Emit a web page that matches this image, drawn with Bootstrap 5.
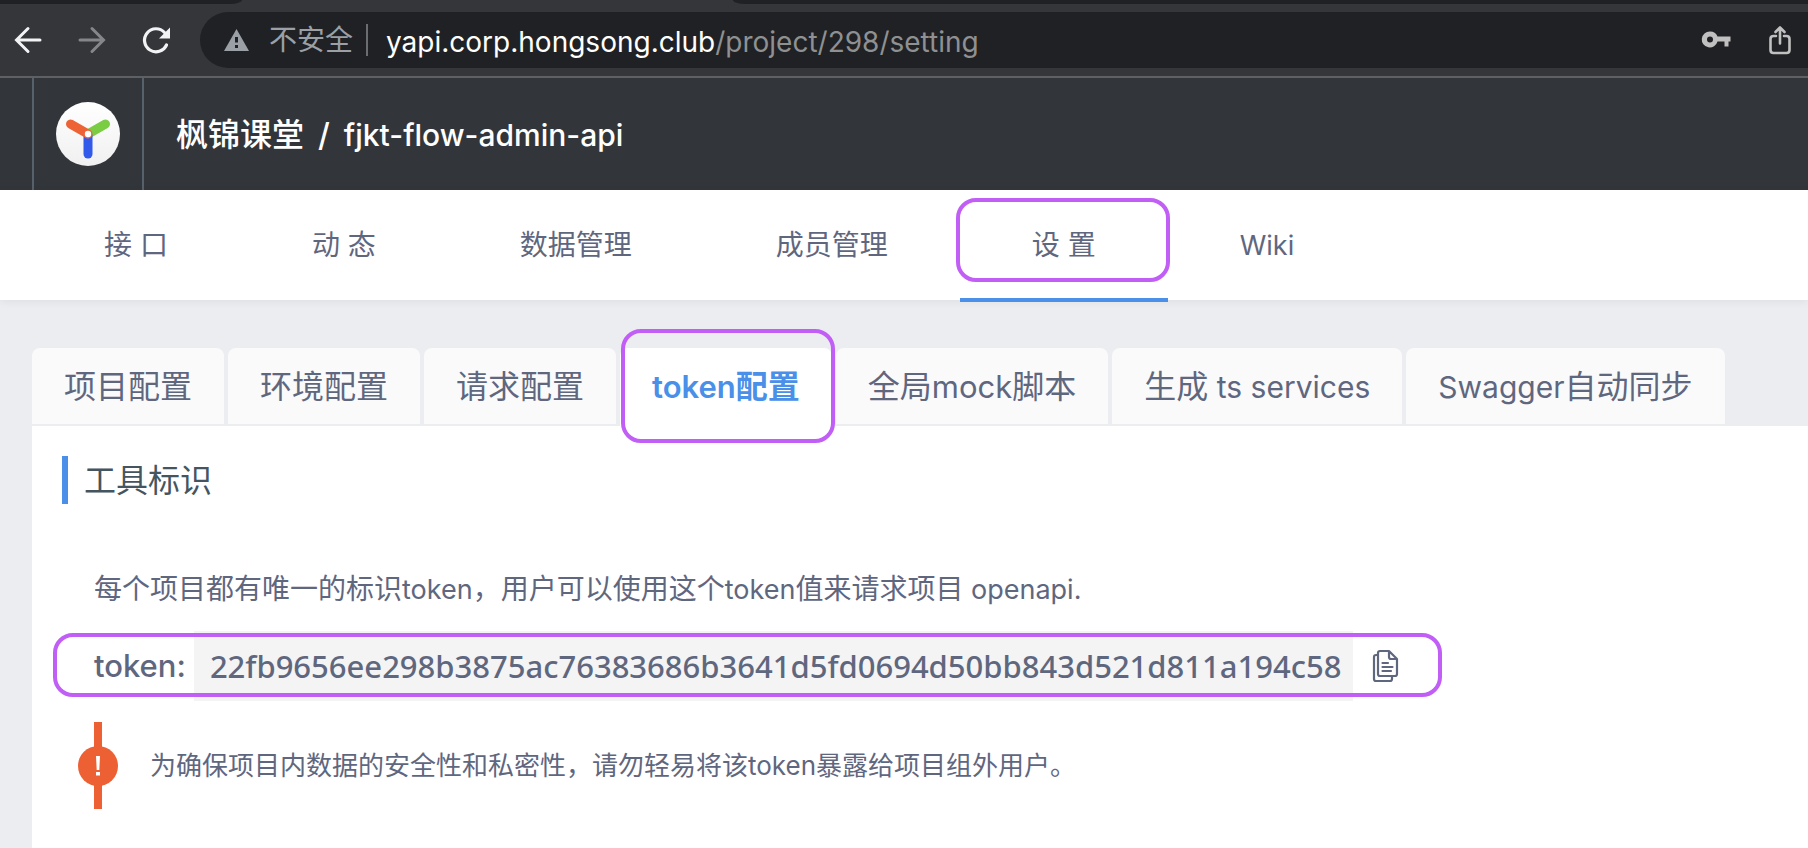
<!DOCTYPE html>
<html lang="zh-CN">
<head>
<meta charset="utf-8">
<meta name="viewport" content="width=device-width, initial-scale=1">
<title>YApi - fjkt-flow-admin-api</title>
<link href="https://cdn.jsdelivr.net/npm/bootstrap@5.3.0/dist/css/bootstrap.min.css" rel="stylesheet">
<style>
  body { font-family: Inter, "Noto Sans CJK SC", sans-serif; font-size: 28px; line-height: 40px; color: #5f677f; background: #ecedf1; }
  .latin { font-size: 27px; }
  .latin-md { font-size: 30px; }
  .latin-lg { font-size: 31px; }

  /* browser toolbar */
  .tab-strip { height: 4px; background: #35363a; }
  .strip-left { width: 242px; background: #202124; border-bottom-right-radius: 12px 4px; }
  .strip-gap { width: 491px; }
  .strip-right { background: #202124; border-bottom-left-radius: 12px 4px; }
  .toolbar { height: 74px; background: #35363a; border-bottom: 2px solid #5f6064; padding: 8px 0 8px 8px; gap: 24px; }
  .tool-btn { width: 40px; height: 40px; padding: 0; border: 0; background: none; line-height: 0; flex: none; }
  .omnibox { height: 56px; background: #202124; border-radius: 28px 0 0 28px; padding-left: 24px; padding-right: 8px; color: #9aa0a6; line-height: 42px; }
  .omnibox .sep { width: 2px; height: 32px; background: #6b6d71; margin: 0 18px 0 13px; }
  .omnibox .host { color: #fff; }
  .omnibox .path { color: #8f9092; }

  /* site header */
  .site-head { height: 112px; background: #32363a; color: #fff; font-size: 32px; padding-left: 32px; }
  .logo-cell { width: 112px; border-left: 2px solid #56616b; border-right: 2px solid #56616b; }
  .crumb { margin-left: 32px; padding-top: 2px; font-weight: 500; }
  .crumb a { color: inherit; text-decoration: none; }
  .crumb .slash { margin: 0 14px; }

  /* project menu */
  .project-menu { height: 110px; background: #fff; padding-left: 32px; box-shadow: 0 2px 8px rgba(0,0,0,.06); position: relative; }
  .project-menu .nav-link { color: inherit; padding: 0 72px; line-height: 110px; height: 112px; white-space: nowrap; }
  .project-menu .active { border-bottom: 4px solid #4a90e8; }

  /* purple highlight frames laid over the controls */
  .framed { position: relative; }
  .framed::after { content: ""; position: absolute; border: 4px solid #c15ef6; border-radius: 20px; pointer-events: none; z-index: 2; }
  .frame-menu::after { top: 8px; bottom: 16px; left: -4px; right: -2px; }
  .frame-tab::after { top: -19px; bottom: -17px; left: 1px; right: -3px; }
  .frame-token::after { top: 2px; bottom: 4px; left: -41px; right: -33px; }

  /* settings tabs */
  .settings { padding: 48px 0 0 32px; }
  .setting-tabs { gap: 4px; border: 0; height: 78px; font-size: 32px; }
  .setting-tabs .nav-link { height: 76px; padding: 2px 32px 0; margin: 0; border: 0; border-radius: 8px 8px 0 0; background: #fafafa; color: #5f677f; white-space: nowrap; }
  .setting-tabs .nav-link.active { height: 78px; padding-bottom: 2px; background: #fff; color: #4a90e8; font-weight: 600; }
  .pane { background: #fff; padding: 30px 30px 0; }
  .pane h2 { font-size: 32px; line-height: 50px; height: 48px; margin: 0; padding-left: 16px; border-left: 6px solid #4a90e8; color: #455560; font-weight: 400; }
  .token-row { font-size: 32px; height: 70px; width: fit-content; margin-top: 21px; font-weight: 500; }
  .token-row code { font-family: "Noto Sans", sans-serif; font-size: 31px; font-weight: 500; color: #5f677f; background: #f4f4f4; padding: 0 12px 0 16px; line-height: 70px; }
  .pane-body { padding: 65px 0 0 32px; }
  .warn { font-size: 26px; margin: 21px 0 0 -16px; gap: 32px; }
</style>
</head>
<body class="min-vh-100 d-flex flex-column">
<header>
  <div class="tab-strip d-flex">
    <div class="strip-left"></div><div class="strip-gap"></div><div class="strip-right flex-grow-1"></div>
  </div>
  <div class="toolbar d-flex align-items-center">
    <button class="tool-btn" type="button" aria-label="后退"><svg width="40" height="40" fill="none" stroke="#f1f3f4" stroke-width="3" stroke-linecap="round"><path d="M32 20H9M20 8.500L8.500 20L20 31.500"/></svg></button>
    <button class="tool-btn" type="button" aria-label="前进"><svg width="40" height="40" fill="none" stroke="#85868a" stroke-width="3" stroke-linecap="round"><path d="M8 20H31M20 8.500L31.500 20L20 31.500"/></svg></button>
    <button class="tool-btn" type="button" aria-label="重新加载"><svg width="40" height="40" fill="none" stroke="#f1f3f4" stroke-width="3.200" stroke-linecap="round"><path d="M30.500 25A11.500 11.500 0 1 1 28.500 12.500"/><path d="M34 7.500V18.500H23Z" fill="#f1f3f4" stroke="none"/></svg></button>
    <div class="omnibox d-flex align-items-center flex-grow-1">
      <svg class="flex-shrink-0" width="25" height="22" viewBox="0 0 25 22"><path d="M12.500 0L25 22H0Z" fill="#9aa0a6"/><path d="M11 8h3v5.500h-3zM11 16h3v3h-3z" fill="#202124"/></svg>
      <span class="ms-3 ps-1">不安全</span><span class="sep"></span>
      <span class="flex-grow-1 pt-1"><span class="host">yapi.corp.hongsong.club</span><span class="path">/project/298/setting</span></span>
      <button class="tool-btn" type="button" aria-label="密码"><svg width="40" height="40"><path fill="#c0c0c0" fill-rule="evenodd" d="M14 11.500a8 8 0 0 1 7.500 5H34.500v5H32.500v5h-4v-5H21.500a8 8 0 1 1-7.500-10zM14 16.500a3 3 0 1 0 0 6a3 3 0 1 0 0-6z"/></svg></button>
      <button class="tool-btn ms-4" type="button" aria-label="分享"><svg width="40" height="40" fill="none" stroke="#c0c0c0" stroke-width="2.600" stroke-linecap="round" stroke-linejoin="round"><path d="M16 16H13.500Q10.500 16 10.500 19V30Q10.500 33 13.500 33H26.500Q29.500 33 29.500 30V19Q29.500 16 26.500 16H24M20 23.500V7.500M15.500 12L20 7.500L24.500 12"/></svg></button>
    </div>
  </div>
  <div class="site-head d-flex align-items-stretch">
    <a href="#" class="logo-cell d-flex align-items-center justify-content-center" aria-label="YApi">
      <svg width="64" height="64" viewBox="0 0 64 64"><defs><linearGradient id="disc" x2="0" y2="1"><stop stop-color="#fff"/><stop offset="1" stop-color="#f0f0f0"/></linearGradient></defs><circle cx="32" cy="32" r="32" fill="url(#disc)"/><g stroke-width="9" stroke-linecap="round"><path d="M32 32L49.500 22" stroke="#7acc43"/><path d="M32 34V52" stroke="#3159ea"/><path d="M32 32L14.500 22" stroke="#ee6336"/></g><circle cx="32" cy="32" r="3.200" fill="#fff"/></svg>
    </a>
    <div class="crumb align-self-center"><a href="#">枫锦课堂</a><span class="slash">/</span><span class="latin-md">fjkt-flow-admin-api</span></div>
  </div>
  <nav class="project-menu d-flex">
    <a class="nav-link" href="#">接 口</a>
    <a class="nav-link" href="#">动 态</a>
    <a class="nav-link" href="#">数据管理</a>
    <a class="nav-link" href="#">成员管理</a>
    <a class="nav-link active framed frame-menu" href="#">设 置</a>
    <a class="nav-link" href="#"><span class="latin">Wiki</span></a>
  </nav>
</header>
<main class="settings flex-grow-1 d-flex flex-column">
  <div class="setting-tabs nav nav-tabs flex-nowrap" role="tablist">
    <button class="nav-link" type="button" role="tab">项目配置</button>
    <button class="nav-link" type="button" role="tab">环境配置</button>
    <button class="nav-link" type="button" role="tab">请求配置</button>
    <button class="nav-link active framed frame-tab" type="button" role="tab" aria-selected="true"><span class="latin-lg">token</span>配置</button>
    <button class="nav-link" type="button" role="tab">全局<span class="latin-lg">mock</span>脚本</button>
    <button class="nav-link" type="button" role="tab">生成<span class="latin-md"> ts services</span></button>
    <button class="nav-link" type="button" role="tab"><span class="latin-md">Swagger</span>自动同步</button>
  </div>
  <section class="pane flex-grow-1" role="tabpanel">
    <h2>工具标识</h2>
    <div class="pane-body">
      <p class="mb-0">每个项目都有唯一的标识<span class="latin">token</span>，用户可以使用这个<span class="latin">token</span>值来请求项目<span class="latin"> openapi.</span></p>
      <div class="token-row framed frame-token d-flex align-items-center">
        <span class="latin-lg me-2">token:</span>
        <code>22fb9656ee298b3875ac76383686b3641d5fd0694d50bb843d521d811a194c58</code>
        <button class="tool-btn ms-3" type="button" aria-label="复制"><svg width="40" height="40" fill="none" stroke="#5f677f" stroke-width="2.200" stroke-linejoin="round" stroke-linecap="round"><path d="M11 5H20L28 13V28Q28 30 26 30H11Q9 30 9 28V7Q9 5 11 5ZM20 5V11Q20 13 22 13H28M13.500 17H19M13.500 21H23.500M13.500 25H22M9 9H7Q5 9 5 11V33Q5 35 7 35H21Q23 35 23 33V31"/></svg></button>
      </div>
      <div class="warn d-flex align-items-center">
        <svg class="flex-shrink-0" width="40" height="87" viewBox="0 0 40 87"><path d="M16 0h8v87h-8z" fill="#ed6033"/><circle cx="20" cy="44" r="20" fill="#ed6033"/><path d="M18 34h4l-.700 14h-2.600zM18 50h4v3.500h-4z" fill="#fff"/></svg>
        <span>为确保项目内数据的安全性和私密性，请勿轻易将该token暴露给项目组外用户。</span>
      </div>
    </div>
  </section>
</main>
<script src="https://cdn.jsdelivr.net/npm/bootstrap@5.3.0/dist/js/bootstrap.bundle.min.js"></script>
</body>
</html>
